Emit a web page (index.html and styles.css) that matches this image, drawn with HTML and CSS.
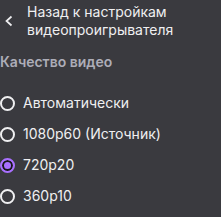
FILE: index.html
```html
<!DOCTYPE html>
<html lang="ru">
<head>
    <meta charset="UTF-8">
    <title>Качество видео</title>
    <link rel="stylesheet" href="styles.css">
</head>
<body>
    <div class="menu">
        <button class="back-button">
            <svg class="back-icon" width="10" height="12" viewBox="0 0 10 12">
                <path d="M7.5 1.5 L2.5 6 L7.5 10.5" fill="none" stroke="#efeff1" stroke-width="1.7"/>
            </svg>
            <span>Назад к настройкам видеопроигрывателя</span>
        </button>
        <div class="section-title">Качество видео</div>
        <div class="options">
            <label class="option"><span class="radio"></span>Автоматически</label>
            <label class="option"><span class="radio"></span>1080p60 (Источник)</label>
            <label class="option"><span class="radio checked"></span>720p20</label>
            <label class="option"><span class="radio"></span>360p10</label>
        </div>
    </div>
</body>
</html>
```

FILE: styles.css
```css
body {
    margin: 0;
    padding: 0;
    background: #3a3a3f;
    font-family: Inter, "Noto Sans", sans-serif;
    color: #efeff1;
}
.menu {
    width: 221px;
    height: 217px;
    overflow: hidden;
}
.back-button {
    display: flex;
    align-items: center;
    gap: 13px;
    background: none;
    border: none;
    color: #efeff1;
    font-family: inherit;
    font-size: 14px;
    line-height: 18px;
    text-align: left;
    padding: 3px 0 0 4px;
    width: 190px;
}
.back-icon {
    flex-shrink: 0;
}
.section-title {
    color: #adadb8;
    font-size: 14px;
    font-weight: 600;
    padding: 14px 0 0 0;
    line-height: 18px;
}
.options {
    display: flex;
    flex-direction: column;
    padding-top: 23px;
    gap: 13px;
}
.option {
    display: flex;
    align-items: center;
    gap: 8px;
    font-size: 14px;
    line-height: 18px;
}
.radio {
    width: 11px;
    height: 11px;
    border: 2px solid #efeff1;
    border-radius: 50%;
    flex-shrink: 0;
}
.radio.checked {
    border-color: #a970ff;
    background: #a970ff;
    box-shadow: inset 0 0 0 2px #18181b;
}
```
